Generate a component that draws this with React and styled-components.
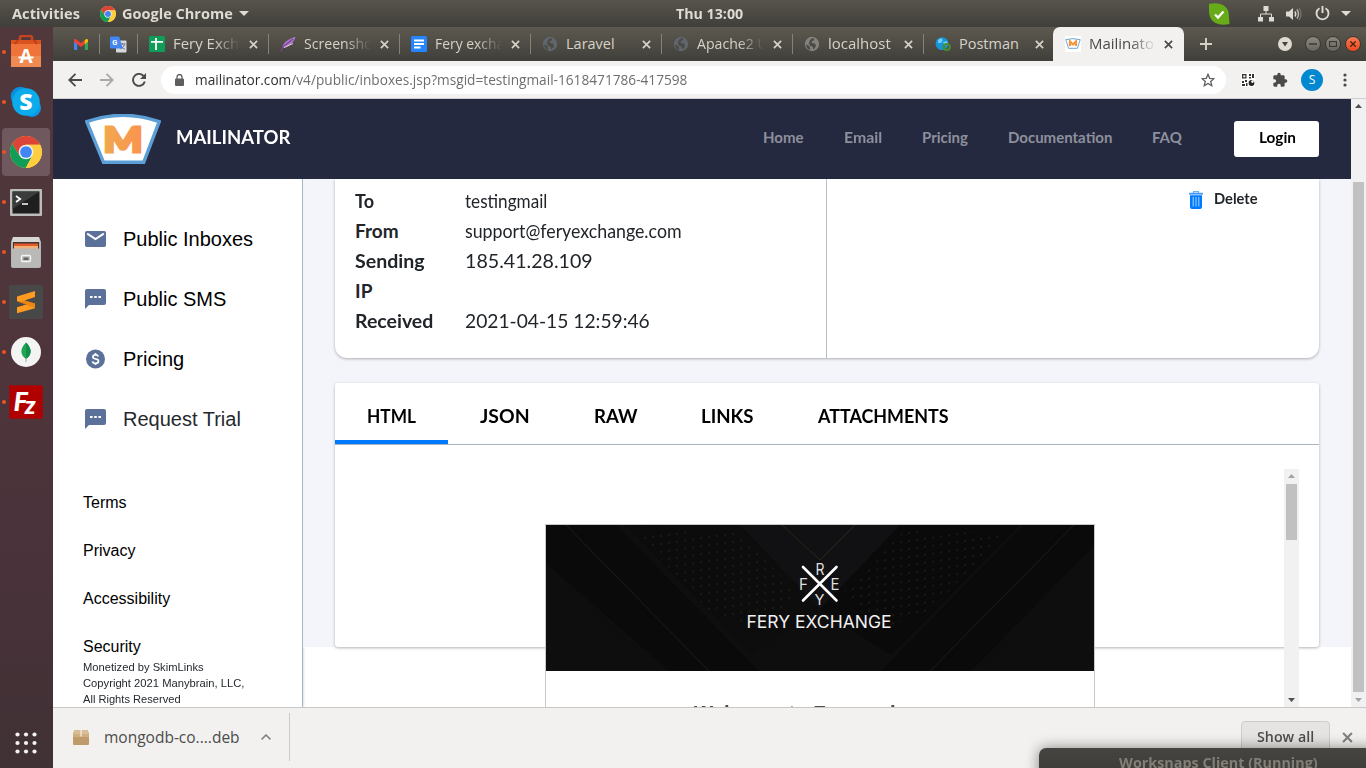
import React, { useLayoutEffect, useRef, useState } from "react";
import styled, { createGlobalStyle } from "styled-components";

const UI = `"Open Sans", "Noto Sans", sans-serif`;
const GEO = `Lato, "Open Sans", sans-serif`;
const ARIAL = `"Liberation Sans", Arial, sans-serif`;

const GlobalStyle = createGlobalStyle`
  * { box-sizing: border-box; }
  body { margin: 0; overflow: hidden; background: #fff; font-family: ${ARIAL}; }
  svg { display: block; flex: none; }
`;

/* ---------- text that keeps a fixed advance width ---------- */
const FitBox = styled.span`
  display: inline-block;
  flex: none;
  white-space: nowrap;
`;
const FitInner = styled.span`
  display: inline-block;
  transform-origin: 0 50%;
`;
function Fit({ w, children }) {
  const ref = useRef(null);
  const [scale, setScale] = useState(1);
  useLayoutEffect(() => {
    const measure = () => {
      if (ref.current && ref.current.offsetWidth) setScale(w / ref.current.offsetWidth);
    };
    measure();
    document.fonts?.ready.then(measure);
  }, [w]);
  return (
    <FitBox style={{ width: w }}>
      <FitInner ref={ref} style={{ transform: `scaleX(${scale})` }}>{children}</FitInner>
    </FitBox>
  );
}

/* ---------- desktop ---------- */
const Desktop = styled.div`
  position: relative;
  width: 1366px;
  height: 768px;
  overflow: hidden;
  display: flex;
  flex-direction: column;
`;
const TopBar = styled.header`
  height: 27px;
  display: grid;
  grid-template-columns: 676px 67px 1fr;
  align-items: center;
  background: linear-gradient(#57544c, #403f3a);
  color: #dfdbd2;
  font: 700 14px/26px ${UI};
`;
const TopLeft = styled.div`
  display: flex;
  align-items: center;
  padding-left: 12px;
`;
const AppMenu = styled.div`
  display: flex;
  align-items: center;
  margin-left: 20px;
  gap: 6px;
`;
const TopRight = styled.div`
  display: flex;
  justify-content: flex-end;
  align-items: center;
  padding-right: 13px;
`;
const Gap = styled.span`
  flex: none;
  width: ${(p) => p.$w}px;
`;
const Workspace = styled.div`
  display: flex;
  height: 741px;
`;

/* ---------- dock ---------- */
const Dock = styled.nav`
  width: 53px;
  flex: none;
  display: flex;
  flex-direction: column;
  background: linear-gradient(#51383c, #4e353b 45%, #49323a 75%, #3f3134);
`;
const DockItem = styled.div`
  height: 50px;
  display: flex;
  align-items: center;
  padding-left: 2px;
`;
const DockTile = styled.div`
  width: 48px;
  height: 48px;
  border-radius: 4px;
  display: flex;
  align-items: center;
  background: ${(p) => (p.$active ? "#6f595e" : "transparent")};
`;
const RunDot = styled.i`
  width: 4px;
  height: 4px;
  flex: none;
  border-radius: 50%;
  background: #e95420;
`;
const DockIcon = styled.div`
  width: 40px;
  height: 40px;
  display: grid;
  place-items: center;
`;
const ShowApps = styled.div`
  margin-top: auto;
  height: 50px;
  display: flex;
  align-items: center;
  padding-left: 15px;
`;

/* ---------- browser chrome ---------- */
const Browser = styled.main`
  width: 1313px;
  display: flex;
  flex-direction: column;
`;
const TabStrip = styled.div`
  height: 34px;
  display: flex;
  align-items: center;
  padding-left: 9px;
  background: linear-gradient(#5d5950, #403f3a);
  color: #d6d2c8;
  font: 400 14.5px/34px ${UI};
`;
const PinnedTab = styled.div`
  width: 38px;
  height: 20px;
  display: grid;
  place-items: center;
  border-right: 1px solid #85827a;
`;
const Tab = styled.div`
  width: 131px;
  height: 34px;
  display: flex;
  align-items: center;
  padding: 0 11px;
  ${(p) => p.$active && "margin-left:-2px; background:#f2f1f0; color:#4b4a48; border-radius:7px 7px 0 0; padding-left:12px;"}
`;
const TabRule = styled.span`
  width: 1px;
  height: 20px;
  margin-right: -1px;
  background: #85827a;
  transform: translateX(-1px);
`;
const TabTitle = styled.div`
  width: 67px;
  margin-left: 8px;
  overflow: hidden;
  white-space: nowrap;
  ${(p) => p.$fade && "-webkit-mask-image: linear-gradient(90deg,#000 62%,transparent 100%);"}
`;
const TabClose = styled.div`
  margin-left: auto;
`;
const WindowButtons = styled.div`
  margin-left: auto;
  padding-right: 5px;
  display: flex;
  align-items: center;
  gap: 4px;
`;
const WinButton = styled.div`
  width: 16px;
  height: 16px;
  flex: none;
  border-radius: 50%;
  display: grid;
  place-items: center;
  border: 1px solid #3a3833;
  background: ${(p) => (p.$close ? "linear-gradient(#f87a55,#e9491c)" : "linear-gradient(#8a8880,#67655e)")};
`;
const Toolbar = styled.div`
  height: 38px;
  display: flex;
  align-items: center;
  background: #f2f1f0;
  border-bottom: 1px solid #cfcecd;
  padding: 0 13px;
`;
const AddressBar = styled.div`
  width: 1065px;
  height: 28px;
  border-radius: 14px;
  background: #fff;
  display: flex;
  align-items: center;
  padding: 0 11px 0 12px;
  color: #6f6e6c;
  font: 400 14px/26px ${UI};
`;
const Host = styled.span`
  color: #2f2f2f;
`;
const Avatar = styled.div`
  width: 22px;
  height: 22px;
  border-radius: 50%;
  background: #0288d1;
  color: #fff;
  font: 400 12px/21px ${UI};
  text-align: center;
`;

/* ---------- page ---------- */
const Viewport = styled.div`
  height: 608px;
  display: flex;
  overflow: hidden;
`;
const Page = styled.div`
  width: 1298px;
`;
const SiteHeader = styled.header`
  height: 80px;
  background: #25293f;
  display: flex;
  align-items: center;
  padding: 0 32px;
`;
const Brand = styled.div`
  margin-left: 15px;
  color: #fff;
  font: 700 19px/40px ${GEO};
  padding-bottom: 5px;
`;
const SiteNav = styled.nav`
  margin-left: auto;
  display: flex;
  gap: 40px;
  color: #8d909c;
  font: 700 15px/24px ${GEO};
  padding-bottom: 4px;
`;
const Login = styled.button`
  margin-left: 52px;
  width: 85px;
  height: 36px;
  padding: 0 1px 2px 0;
  border: 0;
  border-radius: 3px;
  background: #fff;
  color: #000;
  font: 700 14.5px/34px ${GEO};
`;
const PageBody = styled.div`
  height: 528px;
  display: flex;
`;
const Sidebar = styled.aside`
  width: 250px;
  padding-top: 30px;
  border-right: 1px solid #a7b7c1;
  background: #fff;
  box-shadow: 0 0 3px rgba(60, 80, 100, 0.3);
`;
const SideItem = styled.div`
  height: 60px;
  display: flex;
  align-items: center;
  padding-left: 32px;
  font-size: 20px;
  color: ${(p) => (p.$muted ? "#25292d" : "#000")};
`;
const SideIcon = styled.div`
  width: 38px;
`;
const FooterLinks = styled.div`
  margin: 42px 0 0 30px;
  display: flex;
  flex-direction: column;
  gap: 24px;
  font-size: 16px;
  line-height: 24px;
  color: #000;
`;
const Legal = styled.div`
  margin-left: 30px;
  font-size: 11px;
  line-height: 16px;
  color: #25292d;
`;
const Content = styled.section`
  width: 1048px;
  height: 468px;
  background: #f4f5fa;
  padding: 0 32px;
`;
const Details = styled.div`
  height: 179px;
  display: flex;
  background: #fff;
  border-radius: 0 0 12px 12px;
  box-shadow: 0 1px 3px rgba(0, 0, 0, 0.3);
`;
const Fields = styled.dl`
  width: 492px;
  margin: 0;
  padding: 7px 20px 0;
  border-right: 1px solid #b4bfc6;
  color: #212529;
  font: 400 19px/30px ${GEO};
`;
const Field = styled.div`
  display: flex;
`;
const Term = styled.dt`
  width: 110px;
  font-weight: 700;
  display: flex;
  flex-direction: column;
`;
const Value = styled.dd`
  margin: 0;
`;
const DeleteAction = styled.div`
  margin: 7px 61px 0 auto;
  height: 27px;
  display: flex;
  align-items: center;
  gap: 11px;
  color: #212529;
  font: 700 15px/21px ${GEO};
`;
const DeleteLabel = styled.div`
  padding-bottom: 3px;
`;
const MessageCard = styled.div`
  margin-top: 25px;
  height: 264px;
  background: #fff;
  border-radius: 3px;
  box-shadow: 0 1px 3px rgba(0, 0, 0, 0.3);
`;
const MsgTabs = styled.div`
  height: 62px;
  display: flex;
  border-bottom: 1px solid #a7b7c1;
  color: #000;
  font: 700 19px/60px ${GEO};
`;
const MsgTab = styled.div`
  height: 61px;
  padding: 3px 32px 0;
  box-shadow: ${(p) => (p.$active ? "inset 0 -4px #007bff" : "none")};
`;
const Frame = styled.div`
  margin: 24px 20px 0;
  height: 238px;
  display: flex;
  overflow: hidden;
`;
const FrameBody = styled.div`
  flex: 1;
  padding: 55px 0 0 190px;
`;
const Email = styled.div`
  width: 550px;
  height: 300px;
  background: #fff;
  border: 1px solid #c8cac9;
  text-align: center;
  color: #4d4d4d;
  font: 700 20px/24px ${ARIAL};
`;
const EmailTitle = styled.div`
  padding-top: 30px;
`;
const Scrollbar = styled.div`
  width: 15px;
  flex: none;
  background: #f1f1f1;
  display: flex;
  flex-direction: column;
  align-items: center;
  justify-content: space-between;
  padding: 5px 0;
`;
const Thumb = styled.div`
  width: 11px;
  height: ${(p) => p.$h}px;
  margin: ${(p) => p.$top}px 0 auto;
  background: #c1c1c1;
`;

/* ---------- download shelf ---------- */
const Shelf = styled.footer`
  height: 61px;
  border-top: 1px solid #c9c8c6;
  background: #f2f1ef;
  display: flex;
  align-items: center;
  padding: 0 13px 2px 20px;
  color: #4c4c4c;
  font: 400 15.5px/24px ${UI};
`;
const ShelfRule = styled.span`
  width: 1px;
  height: 48px;
  margin-left: 18px;
  background: #cdcbc8;
`;
const ShowAll = styled.div`
  margin-left: auto;
  width: 89px;
  height: 33px;
  border: 1px solid #cfcdca;
  border-radius: 4px;
  background: #e6e4e2;
  text-align: center;
  font: 600 14px/30px ${UI};
`;
const Toast = styled.div`
  position: absolute;
  left: 1039px;
  top: 748px;
  width: 340px;
  height: 34px;
  padding-left: 80px;
  border-radius: 7px 0 0 0;
  background: linear-gradient(#454440, #3b3a36);
  box-shadow: 0 0 14px rgba(0, 0, 0, 0.45);
  color: #827f77;
  font: 700 14px/29px ${UI};
`;

/* ---------- drawings ---------- */
const Caret = ({ c = "#dfdbd2", w = 9, h = 5, up }) => (
  <svg width={w} height={h} viewBox="0 0 10 5" preserveAspectRatio="none">
    <path d={up ? "M0 5h10L5 0z" : "M0 0h10L5 5z"} fill={c} />
  </svg>
);
const Cross = ({ c = "#d6d2c8", s = 9 }) => (
  <svg width={s} height={s} viewBox="0 0 10 10">
    <path d="M1 1l8 8M9 1L1 9" stroke={c} strokeWidth="1.9" />
  </svg>
);
const ChromeIcon = ({ s }) => (
  <svg width={s} height={s} viewBox="0 0 48 48">
    <circle cx="24" cy="24" r="24" fill="#ffcd40" />
    <path d="M24 13h21.2A24 24 0 0 0 3.2 12l11.3 17.5z" fill="#db4437" />
    <path d="M3.2 12A24 24 0 0 0 23.6 48L33.5 29.5L24 24L14.5 29.5z" fill="#0f9d58" />
    <path d="M24 13h21.2A24 24 0 0 1 23.6 48L33.6 29.5z" fill="#ffcd40" />
    <circle cx="24" cy="24" r="11" fill="#f1f1f1" />
    <circle cx="24" cy="24" r="8.8" fill="#4285f4" />
  </svg>
);
const Globe = ({ c = "#5f666c" }) => (
  <svg width="16" height="16" viewBox="0 0 16 16">
    <circle cx="8" cy="8" r="7.2" fill={c} />
    <path d="M2.2 8.5l3.2 1.4 1 3.6-1.2.3A6 6 0 0 1 2.2 8.5zM8 2.2l2.2.4-.5 2-2.5.8 1.3 1.8 2.2.2 1.3 1.6-.8 2.6-2 1.9-.5-2.8-2.4-1-1.4-2.3.8-3z" fill="#4c4a44" />
  </svg>
);
const MailinatorIcon = ({ w, h }) => (
  <svg width={w} height={h} viewBox="0 0 76 50">
    <defs>
      <linearGradient id="mg" x1="0" y1="0" x2="1" y2="0">
        <stop offset="0" stopColor="#f0a94e" />
        <stop offset="1" stopColor="#fb9350" />
      </linearGradient>
    </defs>
    <path d="M1.8 7.6Q38-5 74.2 7.6L58.700 48.300H18.500z" fill="#fff" stroke="#5c9fd6" strokeWidth="3.400" />
    <text x="38" y="37.500" textAnchor="middle" textLength="39" lengthAdjust="spacingAndGlyphs" fontFamily="Lato" fontWeight="900" fontSize="34" fill="url(#mg)" stroke="url(#mg)" strokeWidth="3">M</text>
  </svg>
);
const Favicon = ({ type }) => {
  switch (type) {
    case "sheets":
      return <svg width="16" height="16" viewBox="0 0 16 16"><rect width="16" height="16" rx="1.5" fill="#0f9d58" /><path d="M2 5.8h12M7 2v12" stroke="#fff" strokeWidth="1.8" /></svg>;
    case "docs":
      return <svg width="16" height="16" viewBox="0 0 16 16"><rect width="16" height="16" rx="1.5" fill="#2684fc" /><path d="M3 4.5h10M3 8h10M3 11.5h6.5" stroke="#fff" strokeWidth="1.8" /></svg>;
    case "feather":
      return <svg width="16" height="16" viewBox="0 0 16 16"><path d="M2 12C3 7 8 3 15.5.8 14 6 10 11 2 12z" fill="#b07cc9" /><path d="M.8 15.2L3 11 13 3" stroke="#7d3f9c" strokeWidth="1.3" fill="none" /><path d="M4 11.5l9-4" stroke="#e2cdec" strokeWidth="1" /></svg>;
    case "postman":
      return <svg width="16" height="16" viewBox="0 0 16 16"><circle cx="7" cy="7.6" r="6.4" fill="#1795d4" /><path d="M3 4l3-2 2 2-2 3-3 0zM8 6l4-1 1 3-3 2z" fill="#6bcdf5" /><circle cx="11.8" cy="11" r="3" fill="none" stroke="#4c8c2a" strokeWidth="2.2" /></svg>;
    case "mail":
      return <svg width="16" height="16" viewBox="0 0 16 16"><rect width="16" height="16" fill="#fff" /><path d="M.8 3.6Q8 1.8 15.2 3.6L12.4 12.3H3.6z" fill="#fff" stroke="#6ba8da" /><path d="M5 10V5.5L8 8.5l3-3V10" stroke="#f6953d" strokeWidth="2.2" fill="none" /></svg>;
    case "globe2":
      return <Globe c="#84827d" />;
    default:
      return <Globe />;
  }
};
const Gmail = () => (
  <svg width="14" height="11" viewBox="0 0 14 11">
    <path d="M0 1.5V10a1 1 0 0 0 1 1h2.2V4z" fill="#4285f4" />
    <path d="M14 1.5V10a1 1 0 0 1-1 1h-2.2V4z" fill="#34a853" />
    <path d="M0 1.5C0 .2 1.5-.3 2.4.4L7 3.9 11.6.4 10.8 5.2 7 8 3.2 5.2 0 2.8z" fill="#ea4335" />
    <path d="M10.8 5.2V1L11.6.4C12.5-.3 14 .2 14 1.5V2.8z" fill="#fbbc04" />
  </svg>
);
const Translate = () => (
  <svg width="17" height="17" viewBox="0 0 17 17">
    <rect x="6" y="4.5" width="10.5" height="12" rx="1" fill="#d5d8dc" />
    <path d="M9.5 8h6M12.500 7v1M14.500 8c-.4 2.400-2 4-4 5M10.800 9.500c.8 1.800 2 2.800 4 3.600" stroke="#667" strokeWidth=".9" fill="none" />
    <path d="M1 .5h8.200l3.500 12H1a1 1 0 0 1-1-1v-10a1 1 0 0 1 1-1z" fill="#4285f4" />
    <text x="2.200" y="8.600" fontSize="7.500" fontWeight="700" fontFamily="Roboto" fill="#fff">G</text>
  </svg>
);

const dockIcons = [
  <svg key="store" width="32" height="34" viewBox="0 0 32 34">
    <path d="M10 5V3q0-2 2-2h8q2 0 2 2v2" stroke="#c7431d" strokeWidth="2.6" fill="none" />
    <path d="M1 5h30v27H1z" fill="#f0743a" /><path d="M1 5h30v4H1z" fill="#d9531f" /><path d="M1 21h30v11H1z" fill="#f08a50" />
    <path d="M5 9l3-4M27 9l-3-4" stroke="#b93d18" strokeWidth="1.6" />
    <text x="16" y="27.500" fontSize="19" fontWeight="700" fontFamily="Open Sans" textAnchor="middle" fill="#fff">A</text>
    <path d="M8.500 22.500h15" stroke="#fff" strokeWidth="2" />
  </svg>,
  <svg key="skype" width="32" height="32" viewBox="0 0 32 32">
    <circle cx="10.500" cy="10.500" r="9.800" fill="#0a8fdc" /><circle cx="22" cy="22" r="9" fill="#0a9ae6" /><circle cx="16" cy="16" r="13.800" fill="#0cabec" />
    <text x="16" y="24" fontSize="23" fontWeight="800" fontFamily="Open Sans" textAnchor="middle" fill="#fff">S</text>
  </svg>,
  <ChromeIcon key="chrome" s={32} />,
  <svg key="term" width="32" height="27" viewBox="0 0 32 27">
    <rect width="32" height="27" rx="1" fill="#bdbdbb" /><rect x="2.500" y="2.500" width="27" height="22" fill="#1e1f1e" /><path d="M2.500 2.500h27L2.500 20z" fill="#3b3d3c" />
    <path d="M6 7l4.200 3L6 13M12 15h6" stroke="#fff" strokeWidth="1.700" fill="none" />
  </svg>,
  <svg key="files" width="30" height="32" viewBox="0 0 30 32">
    <path d="M2 1h26l2 5v24q0 2-2 2H2q-2 0-2-2V6z" fill="#b5b5b3" /><path d="M2 1h26l1 5H1z" fill="#d7d7d5" /><rect x="2" y="6" width="26" height="7" fill="#44342f" />
    <rect x="3" y="7.500" width="24" height="3" fill="#e2592c" /><rect x="3" y="10" width="24" height="3" fill="#f0b07a" /><rect x="1" y="12.500" width="28" height="18.500" rx="1" fill="#b9b9b7" />
    <rect x="10.500" y="19.500" width="9" height="6" rx="1" fill="none" stroke="#f2f2f2" strokeWidth="1.400" /><rect x="12.500" y="21.500" width="5" height="2.500" fill="#666" />
  </svg>,
  <svg key="subl" width="34" height="34" viewBox="0 0 34 34">
    <rect width="34" height="34" rx="2" fill="#484848" />
    <path d="M8 11.500L26 6v6L15.500 15.400 26 18.500v4.800L8 28.300v-6l10-3L8 16.200z" fill="#ff9b21" /><path d="M15.500 15.400L26 18.500v4.800L9 16.700z" fill="#e57d0c" opacity=".7" />
  </svg>,
  <svg key="mongo" width="30" height="30" viewBox="0 0 30 30">
    <circle cx="15" cy="15" r="15" fill="#f4f4f4" /><path d="M15 5.500c3.500 3.500 4.800 6.500 4.600 9.500-.2 3-2 5.200-4.600 7-2.600-1.800-4.400-4-4.600-7C10.200 12 11.500 9 15 5.500z" fill="#22a552" /><path d="M15 5.500c3.500 3.500 4.800 6.500 4.600 9.500-.2 3-2 5.200-4.600 7z" fill="#118d4d" /><path d="M15 21v4" stroke="#9aa" strokeWidth="1" />
  </svg>,
  <svg key="fz" width="34" height="34" viewBox="0 0 34 34">
    <rect x="1" y="1" width="32" height="32" fill="#b10000" stroke="#b10000" strokeWidth="2" strokeDasharray="2 1" />
    <text x="4.500" y="26" fontSize="27" fontWeight="900" fontStyle="italic" fontFamily="Lato" fill="#fff">
      F<tspan dx="-3" dy="3" fontSize="25">z</tspan>
    </text>
  </svg>,
];

const SideGlyph = ({ type }) => {
  const c = "#5b7199";
  if (type === "mail")
    return <svg width="21" height="16" viewBox="0 0 21 16"><rect width="21" height="16" rx="1.8" fill={c} /><path d="M2.200 2.600L10.500 8l8.300-5.400" stroke="#fff" strokeWidth="1.900" fill="none" /></svg>;
  if (type === "price")
    return (
      <svg width="21" height="20" viewBox="0 0 21 20">
        <circle cx="10.500" cy="10" r="9.500" fill={c} />
        <path d="M13.300 7.400q-.5-1.500-2.800-1.500-2.600 0-2.600 1.900 0 1.600 2.600 2.100 3 .5 3 2.400 0 2-2.900 2-2.800 0-3.100-1.900M10.500 4v2M10.500 14v2" stroke="#fff" strokeWidth="1.700" fill="none" />
      </svg>
    );
  return <svg width="21" height="20" viewBox="0 0 21 20"><path d="M2 0h17a2 2 0 0 1 2 2v12a2 2 0 0 1-2 2H4l-4 4V2a2 2 0 0 1 2-2z" fill={c} /><path d="M5 7h2.600v2.100H5zM9.200 7h2.600v2.100H9.200zM13.400 7H16v2.100h-2.600z" fill="#fff" /></svg>;
};

const Banner = () => (
  <svg width="548" height="146" viewBox="0 0 548 146">
    <defs>
      <pattern id="dots" width="8" height="8" patternUnits="userSpaceOnUse" patternTransform="skewY(-8)">
        <circle cx="3" cy="3" r=".8" fill="#352d1c" />
      </pattern>
      <linearGradient id="band" x1="0" x2="1" y1="0" y2="0">
        <stop offset="0" stopColor="#0b0b0c" /><stop offset="1" stopColor="#0d0d0e" />
      </linearGradient>
    </defs>
    <rect width="548" height="146" fill="#0e0e0f" />
    <path d="M0 0h70l143 146H123L0 38z" fill="#0a0a0b" />
    <path d="M478 0h70v20L425 146h-90z" fill="#0a0a0b" />
    <path d="M0 38L112 146H0zM548 20v126H430z" fill="#0e0e0f" />
    <path d="M78 0h116l80 84L206 130z" fill="url(#band)" />
    <path d="M354 0h120L345 130l-71-46z" fill="#0a0a0b" />
    <path d="M91 8L190 6 250 66 218 105 165 88zM457 8L358 6 298 66 330 105 383 88z" fill="url(#dots)" />
    <path d="M194 0h160l-80 84z" fill="#111113" />
    <path d="M20 0l143 146M384 146L528 0" stroke="#241c10" strokeWidth="1" />
    <path d="M236 0l38 35L309 0" fill="none" stroke="#2d2616" />
    <path d="M257 42l33.500 33.500M290.500 42L257 75.500" stroke="#fff" strokeWidth="2.600" strokeLinecap="round" />
    <g fill="#dedede" fontFamily="Inter, sans-serif" fontWeight="400">
      <text x="269.500" y="50" fontSize="16.500" textLength="9" lengthAdjust="spacingAndGlyphs">R</text>
      <text x="253" y="65" fontSize="16.500" textLength="9" lengthAdjust="spacingAndGlyphs">F</text>
      <text x="284.500" y="65" fontSize="16.500" textLength="9" lengthAdjust="spacingAndGlyphs">E</text>
      <text x="268.500" y="80" fontSize="14.500" textLength="10" lengthAdjust="spacingAndGlyphs">Y</text>
    </g>
    <text x="200.500" y="103" fill="#f0f0f0" fontFamily="Inter, sans-serif" fontWeight="400" fontSize="17" textLength="145" lengthAdjust="spacingAndGlyphs">FERY EXCHANGE</text>
  </svg>
);

const tabs = [
  { icon: "sheets", title: "Fery Exch", w: 66, fade: true },
  { icon: "feather", title: "Screensho", w: 69, fade: true, rule: true },
  { icon: "docs", title: "Fery excha", w: 69, fade: true, rule: true },
  { icon: "globe", title: "Laravel", w: 49, rule: true },
  { icon: "globe", title: "Apache2 U", w: 71, fade: true, rule: true },
  { icon: "globe2", title: "localhost", w: 63, rule: true },
  { icon: "postman", title: "Postman", w: 60, rule: true },
  { icon: "mail", title: "Mailinato", w: 65, fade: true, active: true },
];

const msgTabs = [["HTML", 49], ["JSON", 50], ["RAW", 43], ["LINKS", 53], ["ATTACHMENTS", 131]];
const nav = [["Home", 41], ["Email", 38], ["Pricing", 46], ["Documentation", 104], ["FAQ", 30]];
const side = [["Public Inboxes", "mail"], ["Public SMS", "sms"], ["Pricing", "price"], ["Request Trial", "sms", true]];

export default function App() {
  return (
    <Desktop>
      <GlobalStyle />
      <TopBar>
        <TopLeft>
          <Fit w={68}>Activities</Fit>
          <AppMenu>
            <ChromeIcon s={16} />
            <Fit w={111}>Google Chrome</Fit>
            <Caret w={10} />
          </AppMenu>
        </TopLeft>
        <Fit w={67}>Thu 13:00</Fit>
        <TopRight>
          <svg width="22" height="22" viewBox="0 0 22 22">
            <path d="M1 1q8-2 14 1 6 3 6 12l.5 7q-8 2-14-1T1 9z" fill="#68ab18" />
            <path d="M7 11.500l3 3 5.500-6" stroke="#fff" strokeWidth="2.300" fill="none" />
          </svg>
          <Gap $w={28} />
          <svg width="16" height="16" viewBox="0 0 16 16" fill="#dfdbd2">
            <path d="M5.500 0h5v5h-5zM0 11h5v4.500H0zM11 11h5v4.500h-5z" />
            <path d="M8 5v3M2.500 11V8h11v3" stroke="#dfdbd2" fill="none" />
          </svg>
          <Gap $w={12} />
          <svg width="16" height="14" viewBox="0 0 16 14">
            <path d="M0 4.500h3L7 1v12L3 9.500H0z" fill="#dfdbd2" />
            <path d="M9 4.500q1.600 2.500 0 5" stroke="#dfdbd2" strokeWidth="1.500" fill="none" />
            <path d="M11 2.500q3 4.500 0 9" stroke="#bdb9b0" strokeWidth="1.400" fill="none" />
            <path d="M13 1q4 6 0 12" stroke="#77746c" strokeWidth="1.300" fill="none" />
          </svg>
          <Gap $w={13} />
          <svg width="15" height="15" viewBox="0 0 15 15">
            <path d="M4.500 2.200a6 6 0 1 0 6 0M7.500 0v7" stroke="#dfdbd2" strokeWidth="1.900" fill="none" />
          </svg>
          <Gap $w={11} />
          <Caret w={10} />
          <Gap $w={2} />
        </TopRight>
      </TopBar>

      <Workspace>
        <Dock>
          {dockIcons.map((icon, i) => (
            <DockItem key={i}>
              <DockTile $active={i === 2}>
                <RunDot />
                <DockIcon>{icon}</DockIcon>
              </DockTile>
            </DockItem>
          ))}
          <ShowApps>
            <svg width="22" height="22" viewBox="0 0 22 22" fill="#f4f2f1">
              {[2.5, 11, 19.5].flatMap((x) => [2.5, 11, 19.5].map((y) => <circle key={`${x}-${y}`} cx={x} cy={y} r="2.100" />))}
            </svg>
          </ShowApps>
        </Dock>

        <Browser>
          <TabStrip>
            <PinnedTab><Gmail /></PinnedTab>
            <PinnedTab><Translate /></PinnedTab>
            {tabs.map((t) => (
              <React.Fragment key={t.title}>
                {t.rule && <TabRule />}
                <Tab $active={t.active}>
                  <Favicon type={t.icon} />
                  <TabTitle $fade={t.fade}><Fit w={t.w}>{t.title}</Fit></TabTitle>
                  <TabClose><Cross c={t.active ? "#4b4a48" : undefined} /></TabClose>
                </Tab>
              </React.Fragment>
            ))}
            <Gap $w={16} />
            <svg width="12" height="12" viewBox="0 0 12 12"><path d="M6 0v12M0 6h12" stroke="#d6d2c8" strokeWidth="1.900" /></svg>
            <WindowButtons>
              <svg width="14" height="14" viewBox="0 0 14 14"><circle cx="7" cy="7" r="7" fill="#dfdbd2" /><path d="M4 5h6L7 9.500z" fill="#45433d" /></svg>
              <Gap $w={5} />
              <WinButton><svg width="8" height="2" viewBox="0 0 8 2"><path d="M0 1h8" stroke="#393731" strokeWidth="1.400" /></svg></WinButton>
              <WinButton><svg width="8" height="6" viewBox="0 0 8 6"><rect x=".5" y=".5" width="7" height="5" fill="none" stroke="#393731" strokeWidth="1.200" /></svg></WinButton>
              <WinButton $close><svg width="6" height="6" viewBox="0 0 6 6"><path d="M.3.3l5.400 5.400M5.700.3L.3 5.700" stroke="#4a2013" strokeWidth="1.300" /></svg></WinButton>
            </WindowButtons>
          </TabStrip>

          <Toolbar>
            <Gap $w={2} />
            <svg width="14" height="14" viewBox="0 0 14 14"><path d="M14 7H1.500M7.500.8L1.300 7l6.200 6.200" stroke="#4b4a48" strokeWidth="1.800" fill="none" /></svg>
            <Gap $w={18} />
            <svg width="14" height="14" viewBox="0 0 14 14"><path d="M0 7h12.500M6.500.8L12.700 7l-6.200 6.200" stroke="#aaa9a7" strokeWidth="1.800" fill="none" /></svg>
            <Gap $w={18} />
            <svg width="14" height="14" viewBox="0 0 14 14"><path d="M12 3.500A6 6 0 1 0 12.800 8.500" stroke="#4b4a48" strokeWidth="1.900" fill="none" /><path d="M14 0v6H8z" fill="#4b4a48" /></svg>
            <Gap $w={15} />
            <AddressBar>
              <Gap $w={2} />
              <svg width="9" height="12" viewBox="0 0 9 12"><rect y="4.500" width="9" height="7.500" rx="1" fill="#5f5e5c" /><path d="M2 5V3a2.500 2.500 0 0 1 5 0v2" stroke="#5f5e5c" strokeWidth="1.300" fill="none" /></svg>
              <Gap $w={11} />
              <Fit w={492}><Host>mailinator.com</Host>/v4/public/inboxes.jsp?msgid=testingmail-1618471786-417598</Fit>
              <Gap $w={514} />
              <svg width="14" height="14" viewBox="0 0 14 14"><path d="M7 1.300l1.700 4 4.200.4-3.200 2.800 1 4.200L7 10.500l-3.700 2.200 1-4.200L1.100 5.700l4.200-.4z" fill="none" stroke="#5f5e5c" strokeWidth="1.300" /></svg>
            </AddressBar>
            <Gap $w={15} />
            <svg width="14" height="14" viewBox="0 0 14 14">
              <rect width="14" height="14" fill="#fff" />
              <path d="M1 1h4.500v4.500H1zM8 1h2v2H8zM11 1h2v4h-2zM8 4h2v1.500H8zM1 8h2v2H1zM4 7h2v2H4zM1 11h3v2H1zM5 10h1.500v3H5z" fill="#333" />
              <path d="M2.300 2.300h2v2h-2z" fill="#fff" /><circle cx="10.500" cy="10" r="2.900" fill="#222" /><circle cx="11.500" cy="8.600" r="1.300" fill="#fff" />
            </svg>
            <Gap $w={17} />
            <svg width="16" height="16" viewBox="0 0 24 24" fill="#4b4a48"><path d="M20.500 11H19V7c0-1.100-.9-2-2-2h-4V3.500a2.500 2.500 0 0 0-5 0V5H4c-1.100 0-2 .9-2 2v3.800h1.500a2.700 2.700 0 0 1 0 5.400H2V20c0 1.100.9 2 2 2h3.800v-1.500a2.700 2.700 0 0 1 5.400 0V22H17c1.100 0 2-.9 2-2v-4h1.500a2.500 2.500 0 0 0 0-5z" /></svg>
            <Gap $w={13} />
            <Avatar>S</Avatar>
            <Gap $w={20} />
            <svg width="4" height="14" viewBox="0 0 4 14" fill="#4b4a48"><circle cx="2" cy="2" r="1.600" /><circle cx="2" cy="7" r="1.600" /><circle cx="2" cy="12" r="1.600" /></svg>
          </Toolbar>

          <Viewport>
            <Page>
              <SiteHeader>
                <MailinatorIcon w={76} h={50} />
                <Brand><Fit w={114}>MAILINATOR</Fit></Brand>
                <SiteNav>{nav.map(([t, w]) => <Fit key={t} w={w}>{t}</Fit>)}</SiteNav>
                <Login><Fit w={37}>Login</Fit></Login>
              </SiteHeader>
              <PageBody>
                <Sidebar>
                  {side.map(([t, icon, muted]) => (
                    <SideItem key={t} $muted={muted}>
                      <SideIcon><SideGlyph type={icon} /></SideIcon>
                      {t}
                    </SideItem>
                  ))}
                  <FooterLinks>
                    <span>Terms</span>
                    <span>Privacy</span>
                    <span>Accessibility</span>
                    <span>Security</span>
                  </FooterLinks>
                  <Legal>
                    <div><Fit w={121}>Monetized by SkimLinks</Fit></div>
                    <div><Fit w={161}>Copyright 2021 Manybrain, LLC,</Fit></div>
                    <div><Fit w={98}>All Rights Reserved</Fit></div>
                  </Legal>
                </Sidebar>
                <Content>
                  <Details>
                    <Fields>
                      <Field><Term><Fit w={19}>To</Fit></Term><Value><Fit w={82}>testingmail</Fit></Value></Field>
                      <Field><Term><Fit w={44}>From</Fit></Term><Value><Fit w={217}>support@feryexchange.com</Fit></Value></Field>
                      <Field><Term><Fit w={70}>Sending</Fit><Fit w={17}>IP</Fit></Term><Value><Fit w={128}>185.41.28.109</Fit></Value></Field>
                      <Field><Term><Fit w={78}>Received</Fit></Term><Value><Fit w={185}>2021-04-15 12:59:46</Fit></Value></Field>
                    </Fields>
                    <DeleteAction>
                      <svg width="14" height="18" viewBox="0 0 14 18">
                        <path d="M4.500 2V.700h5V2" stroke="#6bb0fb" strokeWidth="1.200" fill="none" />
                        <path d="M0 1.800h14v1.800H0z" fill="#3f97fb" />
                        <path d="M1 4.200h12V16q0 2-2 2H3q-2 0-2-2z" fill="#007bff" />
                        <path d="M4.200 6v9.500M7 6v9.500M9.800 6v9.500" stroke="#a9d2ff" strokeWidth="1" />
                      </svg>
                      <DeleteLabel><Fit w={44}>Delete</Fit></DeleteLabel>
                    </DeleteAction>
                  </Details>
                  <MessageCard>
                    <MsgTabs>
                      {msgTabs.map(([t, w], i) => <MsgTab key={t} $active={i === 0}><Fit w={w}>{t}</Fit></MsgTab>)}
                    </MsgTabs>
                    <Frame>
                      <FrameBody>
                        <Email>
                          <Banner />
                          <EmailTitle><Fit w={256}>Welcome to Feryexchange</Fit></EmailTitle>
                        </Email>
                      </FrameBody>
                      <Scrollbar>
                        <Caret up c="#a3a3a3" w={7} h={4} />
                        <Thumb $h={56} $top={6} />
                        <Caret c="#505050" w={7} h={4} />
                      </Scrollbar>
                    </Frame>
                  </MessageCard>
                </Content>
              </PageBody>
            </Page>
            <Scrollbar>
              <Caret up c="#505050" w={7} h={4} />
              <Thumb $h={510} $top={74} />
              <Caret c="#a3a3a3" w={7} h={4} />
            </Scrollbar>
          </Viewport>

          <Shelf>
            <svg width="16" height="15" viewBox="0 0 16 15">
              <path d="M1.500 0h13L16 4v10q0 1-1 1H1q-1 0-1-1V4z" fill="#c09a6b" /><path d="M1.500 0h13L16 4H0z" fill="#d9bd97" /><path d="M0 4h16v3H0z" fill="#cfae82" /><path d="M7.300 0h1.600v6.500H7.300z" fill="#f1e3cd" />
            </svg>
            <Gap $w={15} />
            <Fit w={136}>mongodb-co....deb</Fit>
            <Gap $w={21} />
            <svg width="10" height="6" viewBox="0 0 10 6"><path d="M.6 5.400L5 1l4.400 4.400" stroke="#82807d" strokeWidth="1.500" fill="none" /></svg>
            <ShelfRule />
            <ShowAll><Fit w={57}>Show all</Fit></ShowAll>
            <Gap $w={12} />
            <Cross c="#82807d" s={11} />
          </Shelf>
        </Browser>
      </Workspace>
      <Toast><Fit w={199}>Worksnaps Client (Running)</Fit></Toast>
    </Desktop>
  );
}
